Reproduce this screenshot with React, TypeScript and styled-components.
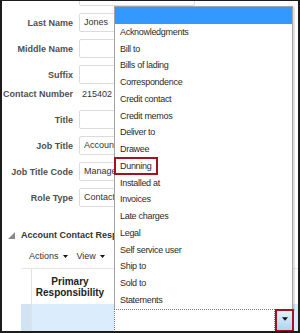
import React from 'react';

// Libraries
import styled, {createGlobalStyle} from 'styled-components';

const GlobalStyle = createGlobalStyle`
  body {
    margin: 0;
    background: #ffffff;
    font-family: 'Liberation Sans', Arial, sans-serif;
  }
`;

const Frame = styled.div`
  width: 300px;
  height: 333px;
  box-sizing: border-box;
  border: 2px solid #1c1c1c;
  border-top-width: 1px;
  position: relative;
  overflow: hidden;
  background: #ffffff;
`;

const Form = styled.div`
  display: flex;
  flex-direction: column;
  margin-top: -14px;
`;

const Row = styled.div<{$text?: boolean}>`
  display: flex;
  align-items: center;
  height: ${({$text}) => ($text ? '12px' : '19px')};
  margin-top: ${({$text}) => ($text ? '-3px' : '0')};
  margin-bottom: ${({$text}) => ($text ? '10px' : '7px')};
`;

const Label = styled.div`
  width: 71px;
  margin-right: 6px;
  text-align: right;
  font-size: 9px;
  font-weight: bold;
  color: #4f4f4f;
  white-space: nowrap;
`;

const Input = styled.div`
  width: 116px;
  height: 19px;
  box-sizing: border-box;
  border: 1px solid #dcdcdc;
  border-radius: 2px;
  padding: 0 4px;
  font-size: 9px;
  line-height: 17px;
  color: #333333;
  white-space: nowrap;
  overflow: hidden;
`;

const Value = styled.div`
  padding-left: 3px;
  font-size: 9px;
  color: #333333;
`;

const Section = styled.div`
  display: flex;
  align-items: center;
  gap: 6px;
  height: 14px;
  margin-top: 14px;
  padding-left: 6px;
  font-size: 9px;
  font-weight: bold;
  color: #333333;
  white-space: nowrap;
`;

const Toolbar = styled.div`
  display: flex;
  align-items: center;
  height: 14px;
  margin-top: 7px;
  padding-left: 27px;
  gap: 9px;
  font-size: 9px;
  color: #333333;
`;

const ToolButton = styled.span`
  display: flex;
  align-items: center;
  gap: 4px;
`;

const Table = styled.div`
  margin-top: 5px;
  margin-left: 19px;
  border-top: 1px solid #e4e4e4;
`;

const HeaderRow = styled.div`
  display: flex;
  height: 35px;
`;

const RowHeaderCell = styled.div<{$selected?: boolean}>`
  width: 10px;
  border-right: 1px solid #e2e2e2;
  background: ${({$selected}) => ($selected ? '#d2e4f4' : 'transparent')};
`;

const HeaderCell = styled.div`
  width: 76px;
  display: flex;
  align-items: center;
  justify-content: center;
  text-align: center;
  font-size: 10px;
  font-weight: bold;
  line-height: 11px;
  color: #222222;
`;

const DataRow = styled.div`
  display: flex;
  height: 28px;
  background: #dbedfd;
`;

const ListBox = styled.ul`
  position: absolute;
  left: 112px;
  top: 5px;
  width: 177px;
  margin: 0;
  padding: 0;
  list-style: none;
  background: #ffffff;
  border: 1px solid #a3a3a3;
  box-shadow: 2px 1px 0 rgba(0, 0, 0, 0.12);
`;

const Option = styled.li<{$active?: boolean}>`
  position: relative;
  height: 16.75px;
  line-height: 16.75px;
  padding-left: 5px;
  font-size: 9px;
  letter-spacing: -0.3px;
  color: #2b2b2b;
  background: ${({$active}) => ($active ? '#3399ff' : 'transparent')};
`;

const Callout = styled.span`
  position: absolute;
  left: -1px;
  top: -1px;
  width: 44px;
  height: 18px;
  box-sizing: border-box;
  border: 2px solid #a3131f;
`;

const Combo = styled.div`
  position: absolute;
  left: 112px;
  top: 308px;
  width: 180px;
  height: 23px;
  display: flex;
`;

const ComboInput = styled.div`
  flex: 1;
  box-sizing: border-box;
  border: 1px dotted #7a7a7a;
  background: #ffffff;
`;

const ComboButton = styled.div`
  width: 19px;
  box-sizing: border-box;
  border: 2px solid #a3131f;
  background: linear-gradient(#e3f2fc, #acd4f1);
  display: flex;
  justify-content: center;
  padding-top: 6px;
`;

const Caret = ({size = 5}: {size?: number}) => (
  <svg width={size} height={Math.ceil(size * 0.6)} viewBox="0 0 10 6">
    <polygon points="0,0 10,0 5,6" fill="#111111" />
  </svg>
);

const fields: {label: string; value?: string; text?: boolean}[] = [
  {label: 'First Name', value: 'Jane'},
  {label: 'Last Name', value: 'Jones'},
  {label: 'Middle Name', value: ''},
  {label: 'Suffix', value: ''},
  {label: 'Contact Number', value: '215402', text: true},
  {label: 'Title', value: ''},
  {label: 'Job Title', value: 'Accountant'},
  {label: 'Job Title Code', value: 'Manager'},
  {label: 'Role Type', value: 'Contact'},
];

const options = [
  '',
  'Acknowledgments',
  'Bill to',
  'Bills of lading',
  'Correspondence',
  'Credit contact',
  'Credit memos',
  'Deliver to',
  'Drawee',
  'Dunning',
  'Installed at',
  'Invoices',
  'Late charges',
  'Legal',
  'Self service user',
  'Ship to',
  'Sold to',
  'Statements',
];

const App: React.FC = () => {
  return (
    <>
      <GlobalStyle />
      <Frame>
        <Form>
          {fields.map(({label, value, text}) => (
            <Row key={label} $text={text}>
              <Label>{label}</Label>
              {text ? <Value>{value}</Value> : <Input>{value}</Input>}
            </Row>
          ))}
        </Form>

        <Section>
          <svg width="7" height="7" viewBox="0 0 7 7">
            <polygon points="7,0 7,7 0,7" fill="#8a8a8a" />
          </svg>
          Account Contact Responsibilities
        </Section>

        <Toolbar>
          <ToolButton>
            Actions <Caret />
          </ToolButton>
          <ToolButton>
            View <Caret />
          </ToolButton>
        </Toolbar>

        <Table>
          <HeaderRow>
            <RowHeaderCell />
            <HeaderCell>
              Primary
              <br />
              Responsibility
            </HeaderCell>
          </HeaderRow>
          <DataRow>
            <RowHeaderCell $selected />
          </DataRow>
        </Table>

        <ListBox>
          {options.map((name, i) => (
            <Option key={i} $active={i === 0}>
              {name}
              {name === 'Dunning' && <Callout />}
            </Option>
          ))}
        </ListBox>

        <Combo>
          <ComboInput />
          <ComboButton>
            <Caret size={6} />
          </ComboButton>
        </Combo>
      </Frame>
    </>
  );
};

export default App;
